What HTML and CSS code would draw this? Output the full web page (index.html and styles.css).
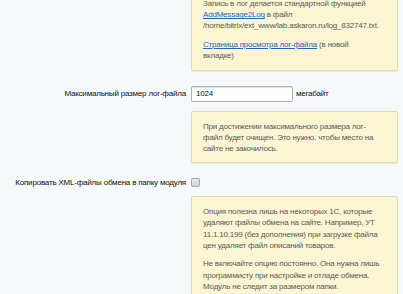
FILE: index.html
```html
<!DOCTYPE html>
<html lang="ru">
<head>
    <meta charset="UTF-8">
    <title>Настройки модуля</title>
    <link rel="stylesheet" href="styles.css">
</head>
<body>
    <div class="options">
        <!-- лог -->
        <div class="label"></div>
        <div class="field">
            <div class="note">
                <p>Запись в лог делается стандартной функцией <a href="#">AddMessage2Log</a> в файл /home/bitrix/ext_www/lab.askaron.ru/log_832747.txt.</p>
                <p><a href="#">Страница просмотра лог-файла</a> (в новой<br>вкладке)</p>
            </div>
        </div>

        <div class="label row size-row">Максимальный размер лог-файла</div>
        <div class="field row size-row">
            <input type="text" class="text-input" value="1024" />
            <span class="unit">мегабайт</span>
        </div>

        <div class="label"></div>
        <div class="field">
            <div class="note">
                <p>При достижении максимального размера лог-файл будет очищен. Это нужно, чтобы место на сайте не закочилось.</p>
            </div>
        </div>

        <!-- обмен -->
        <div class="label row check-row">Копировать XML-файлы обмена в папку модуля</div>
        <div class="field row check-row">
            <input type="checkbox" class="check" />
        </div>

        <div class="label"></div>
        <div class="field">
            <div class="note">
                <p>Опция полезна лишь на некоторых 1С, которые удаляют файлы обмена на сайте. Например, УТ 11.1.10.199 (без дополнения) при загрузке файла цен удаляет файл описаний товаров.</p>
                <p>Не включайте опцию постоянно. Она нужна лишь программисту при настройке и отладе обмена. Модуль не следит за размером папки.</p>
            </div>
        </div>
    </div>
</body>
</html>
```

FILE: styles.css
```css
body {
    margin: 0;
    background-color: #f5f9f9;
    font-family: 'Liberation Sans', Arial, sans-serif;
    font-size: 8px;
    letter-spacing: -0.2px;
    color: #111;
    overflow: hidden;
}

.options {
    display: grid;
    grid-template-columns: 186px minmax(0, 1fr);
    column-gap: 5px;
    padding-right: 5px;
    margin-top: -12px;
}

.label {
    text-align: right;
}

.row {
    display: flex;
    align-items: center;
    height: 16px;
}

.label.row {
    justify-content: flex-end;
    white-space: nowrap;
}

.size-row {
    margin: 15px 0 9px;
}

.check-row {
    margin: 11px 0 6px;
}

.note {
    background-color: #faf5d3;
    border: 1px solid #e4dbae;
    border-radius: 2px;
    box-shadow: 0 1px 1px rgba(0, 0, 0, 0.08);
    padding: 9px 14px 8px 11px;
    color: #5b5b5b;
    line-height: 11.2px;
    overflow-wrap: anywhere;
}

.note p {
    margin: 0;
}

.note p + p {
    margin-top: 7.5px;
}

.note a {
    color: #2267b5;
    text-decoration: underline;
}

.text-input {
    box-sizing: border-box;
    width: 102px;
    height: 16px;
    margin: 0;
    padding: 0 4px;
    border: 1px solid #a8b0b4;
    border-radius: 2px;
    background-color: #fff;
    box-shadow: inset 0 1px 1px rgba(0, 0, 0, 0.12);
    font-family: inherit;
    font-size: 8px;
    letter-spacing: -0.2px;
    color: #111;
}

.unit {
    margin-left: 3px;
}

.check {
    appearance: none;
    -webkit-appearance: none;
    box-sizing: border-box;
    width: 9px;
    height: 9px;
    margin: 0;
    border: 1px solid #a3abb0;
    border-radius: 2px;
    background: linear-gradient(#e6ebed, #cfd6d9);
}
```
